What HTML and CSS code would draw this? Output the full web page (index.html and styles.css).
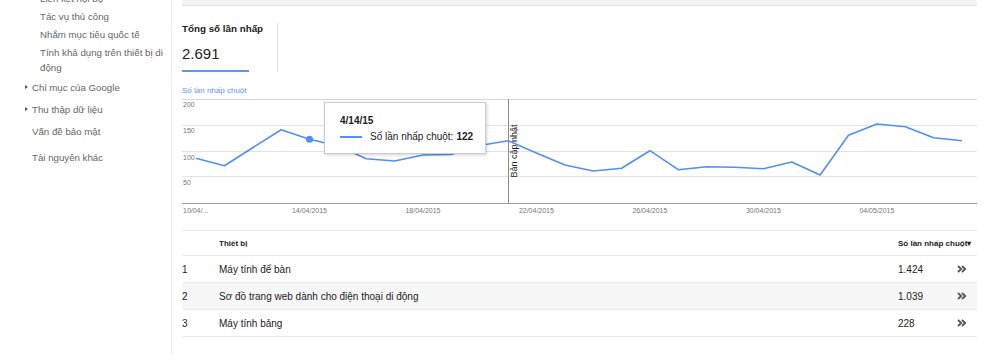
FILE: index.html
```html
<!DOCTYPE html>
<html lang="vi">
<head>
  <meta charset="UTF-8" />
  <title>Số lần nhấp chuột</title>
  <link rel="stylesheet" href="styles.css">
</head>
<body>
  <div class="page">
    <nav class="sidebar">
      <ul class="sub">
        <li>Liên kết nội bộ</li>
        <li>Tác vụ thủ công</li>
        <li>Nhắm mục tiêu quốc tế</li>
        <li>Tính khả dụng trên thiết bị di động</li>
      </ul>
      <ul class="main-nav">
        <li class="has-arrow">Chỉ mục của Google</li>
        <li class="has-arrow">Thu thập dữ liệu</li>
        <li>Vấn đề bảo mật</li>
        <li class="spaced">Tài nguyên khác</li>
      </ul>
    </nav>

    <main class="content">
      <div class="topbar"></div>

      <div class="summary">
        <div class="tile">
          <div class="tile-title">Tổng số lần nhấp</div>
          <div class="tile-value">2.691</div>
          <div class="tile-bar"></div>
        </div>
      </div>

      <div class="metric-link">Số lần nhấp chuột</div>

      <div class="chart">
        <svg width="795" height="125" viewBox="0 0 795 125">
          <g stroke="#e3e3e3" stroke-width="1">
            <line x1="0" y1="4.5" x2="795" y2="4.5" stroke="#d6d6d6"/>
            <line x1="0" y1="30.5" x2="795" y2="30.5"/>
            <line x1="0" y1="56.5" x2="795" y2="56.5"/>
            <line x1="0" y1="81.5" x2="795" y2="81.5"/>
          </g>
          <line x1="0" y1="108.5" x2="795" y2="108.5" stroke="#9a9a9a"/>
          <g class="axis">
            <text x="1" y="12">200</text>
            <text x="1" y="38">150</text>
            <text x="1" y="64.5">100</text>
            <text x="1" y="89.5">50</text>
            <text x="1" y="118">10/04/...</text>
            <text x="127.5" y="118" text-anchor="middle">14/04/2015</text>
            <text x="241" y="118" text-anchor="middle">18/04/2015</text>
            <text x="354.4" y="118" text-anchor="middle">22/04/2015</text>
            <text x="467.9" y="118" text-anchor="middle">26/04/2015</text>
            <text x="581.4" y="118" text-anchor="middle">30/04/2015</text>
            <text x="694.9" y="118" text-anchor="middle">04/05/2015</text>
          </g>
          <polyline fill="none" stroke="#4f8ff7" stroke-width="1.6" stroke-linejoin="round"
            points="14,63.3 42.4,70.7 70.7,52.7 99.1,34.7 127.5,44.3 155.9,51 184.2,63.7 212.6,66 241,60 269.3,59.5 297.7,50.5 326.1,45.7 354.4,58 382.8,70 411.2,76 439.6,73.3 467.9,55.7 496.3,74.7 524.7,71.7 553,72.3 581.4,73.7 609.8,67 638.1,80 666.5,40.3 694.9,29 723.3,31.7 751.6,42.7 780,45.7"/>
          <circle cx="127.5" cy="44.3" r="3.5" fill="#4f8ff7"/>
          <line x1="326.5" y1="4" x2="326.5" y2="108" stroke="#8a8a8a"/>
          <text class="annotation" transform="translate(334.5 56) rotate(-90)" text-anchor="middle">Bản cập nhật</text>
        </svg>

        <div class="tooltip">
          <div class="tip-date">4/14/15</div>
          <div class="tip-row"><span class="tip-line"></span>Số lần nhấp chuột: <b>122</b></div>
        </div>
      </div>

      <table class="devices">
        <thead>
          <tr><th class="num"></th><th>Thiết bị</th><th colspan="2">Số lần nhấp chuột▾</th></tr>
        </thead>
        <tbody>
          <tr><td class="num">1</td><td>Máy tính để bàn</td><td class="val">1.424</td><td class="go"><svg width="10" height="8" viewBox="0 0 10 8"><path d="M1 1 L4.2 4 L1 7 M5 1 L8.2 4 L5 7" fill="none" stroke="#555" stroke-width="1.8"/></svg></td></tr>
          <tr class="alt"><td class="num">2</td><td>Sơ đồ trang web dành cho điện thoại di động</td><td class="val">1.039</td><td class="go"><svg width="10" height="8" viewBox="0 0 10 8"><path d="M1 1 L4.2 4 L1 7 M5 1 L8.2 4 L5 7" fill="none" stroke="#555" stroke-width="1.8"/></svg></td></tr>
          <tr><td class="num">3</td><td>Máy tính bảng</td><td class="val">228</td><td class="go"><svg width="10" height="8" viewBox="0 0 10 8"><path d="M1 1 L4.2 4 L1 7 M5 1 L8.2 4 L5 7" fill="none" stroke="#555" stroke-width="1.8"/></svg></td></tr>
        </tbody>
      </table>
    </main>
  </div>
</body>
</html>
```

FILE: styles.css
```css
body { margin: 0; font-family: "Liberation Sans", Arial, sans-serif; color: #222; background: #fff; overflow: hidden; }
ul { list-style: none; margin: 0; padding: 0; }

.page { display: flex; height: 355px; }

.sidebar { width: 171px; border-right: 1px solid #ebebeb; font-size: 9.7px; color: #666; }
.sub { margin-top: -11px; padding-left: 40px; padding-right: 4px; }
.sub li { line-height: 15px; padding: 1.5px 0; }
.main-nav { padding-left: 32px; }
.main-nav li { line-height: 15px; padding: 3.5px 0; position: relative; }
.main-nav li.spaced { margin-top: 4px; }
.has-arrow::before { content: ""; position: absolute; left: -7px; top: 9px; border-left: 3px solid #555; border-top: 2.5px solid transparent; border-bottom: 2.5px solid transparent; }

.content { margin-left: 10px; width: 795px; }
.topbar { height: 5px; background: #f3f3f3; border-bottom: 1px solid #e2e2e2; }

.summary { display: flex; margin-top: 17px; }
.tile { width: 95px; border-right: 1px solid #e0e0e0; }
.tile-title { font-size: 9.8px; font-weight: bold; line-height: 12px; white-space: nowrap; }
.tile-value { font-size: 15px; line-height: 18px; margin-top: 10px; }
.tile-bar { width: 67px; height: 2px; background: #5b95f5; margin-top: 7px; }

.metric-link { font-size: 8px; line-height: 9px; margin-top: 14px; color: #5c94f0; }

.chart { position: relative; height: 125px; }
.chart svg { display: block; }
.axis { font-size: 7px; fill: #777; }
.annotation { font-size: 9px; fill: #222; }

.tooltip { position: absolute; left: 142px; top: 7px; width: 160px; height: 50px; background: #fff; border: 1px solid #ccc; box-shadow: 1px 1px 3px rgba(0,0,0,0.18); }
.tip-date { font-size: 10px; font-weight: bold; line-height: 12px; margin: 12px 0 0 15px; }
.tip-row { font-size: 10px; line-height: 12px; margin: 3.5px 0 0 15px; display: flex; align-items: center; }
.tip-line { width: 22px; height: 2px; background: #4f8ff7; margin-right: 8px; }
.tip-row b { margin-left: 3px; }

.devices { border-collapse: collapse; width: 795px; margin-top: 10px; font-size: 10px; }
.devices th { font-size: 8px; text-align: left; height: 24px; padding: 0; border-top: 1px solid #ebebeb; border-bottom: 1px solid #ebebeb; }
.devices td { height: 26px; padding: 0; border-bottom: 1px solid #ebebeb; }
.devices .num { width: 37px; }
.devices .val { width: 59px; }
.devices .go { width: 20px; }
.devices .go svg { display: block; }
.devices tr.alt td { background: #f7f7f7; }
```
